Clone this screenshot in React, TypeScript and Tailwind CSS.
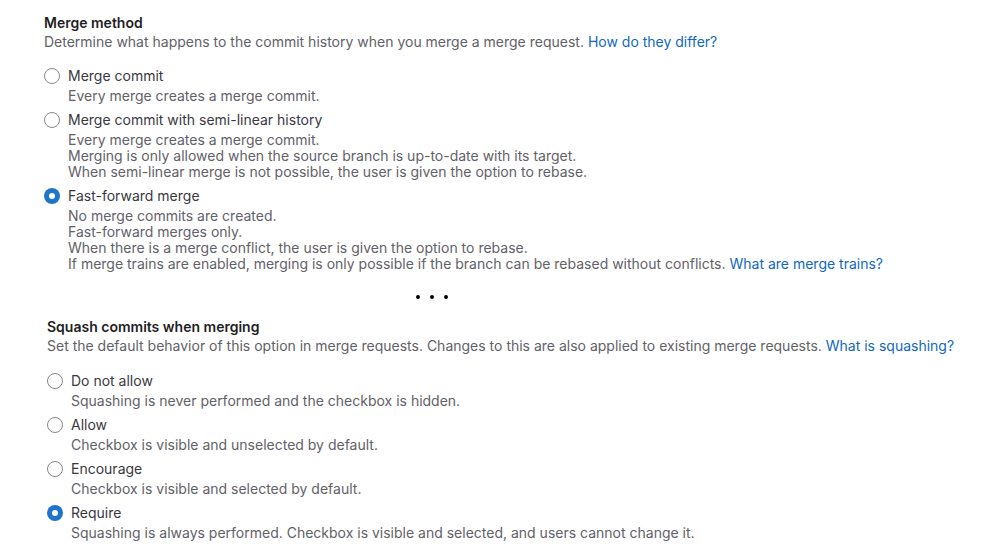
import type { ReactNode } from 'react'

interface RadioOptionProps {
  label: string
  checked?: boolean
  children: ReactNode
}

function RadioOption({ label, checked, children }: RadioOptionProps) {
  return (
    <div className="flex gap-2">
      <div className="pt-[2px]">
        {checked ? (
          <span className="flex h-4 w-4 items-center justify-center rounded-full bg-[#1f75cb]">
            <span className="h-[6px] w-[6px] rounded-full bg-white" />
          </span>
        ) : (
          <span className="block h-4 w-4 rounded-full border border-[#89888d] bg-white" />
        )}
      </div>
      <div>
        <div className="text-[14px] leading-5 text-[#3a383f]">{label}</div>
        <div className="mt-[2px] text-[14px] leading-4 text-[#626168]">{children}</div>
      </div>
    </div>
  )
}

function Link({ children }: { children: ReactNode }) {
  return <span className="text-[#1068bf]">{children}</span>
}

export default function App() {
  return (
    <div className="h-[556px] w-[983px] bg-white font-['Inter',sans-serif]">
      {/* Merge method */}
      <div className="pl-[44px] pt-[13px]">
        <div className="text-[14px] font-semibold leading-5 text-[#1f1e24]">Merge method</div>
        <div className="mt-[-1px] text-[14px] leading-5 text-[#626168]">
          Determine what happens to the commit history when you merge a merge request.{' '}
          <Link>How do they differ?</Link>
        </div>
        <div className="mt-[14px] flex flex-col gap-[6px]">
          <RadioOption label="Merge commit">
            <div>Every merge creates a merge commit.</div>
          </RadioOption>
          <RadioOption label="Merge commit with semi-linear history">
            <div>Every merge creates a merge commit.</div>
            <div>Merging is only allowed when the source branch is up-to-date with its target.</div>
            <div>When semi-linear merge is not possible, the user is given the option to rebase.</div>
          </RadioOption>
          <RadioOption label="Fast-forward merge" checked>
            <div>No merge commits are created.</div>
            <div>Fast-forward merges only.</div>
            <div>When there is a merge conflict, the user is given the option to rebase.</div>
            <div>
              If merge trains are enabled, merging is only possible if the branch can be rebased without
              conflicts. <Link>What are merge trains?</Link>
            </div>
          </RadioOption>
        </div>
      </div>

      {/* separator */}
      <div className="flex gap-[10px] pl-[416px] pt-[23px]">
        <span className="h-[4px] w-[4px] rounded-full bg-black" />
        <span className="h-[4px] w-[4px] rounded-full bg-black" />
        <span className="h-[4px] w-[4px] rounded-full bg-black" />
      </div>

      {/* Squash commits */}
      <div className="pl-[47px] pt-[18px]">
        <div className="text-[14px] font-semibold leading-5 text-[#1f1e24]">Squash commits when merging</div>
        <div className="mt-[-1px] text-[14px] leading-5 text-[#626168]">
          Set the default behavior of this option in merge requests. Changes to this are also applied to
          existing merge requests. <Link>What is squashing?</Link>
        </div>
        <div className="mt-[15px] flex flex-col gap-[6px]">
          <RadioOption label="Do not allow">
            <div>Squashing is never performed and the checkbox is hidden.</div>
          </RadioOption>
          <RadioOption label="Allow">
            <div>Checkbox is visible and unselected by default.</div>
          </RadioOption>
          <RadioOption label="Encourage">
            <div>Checkbox is visible and selected by default.</div>
          </RadioOption>
          <RadioOption label="Require" checked>
            <div>Squashing is always performed. Checkbox is visible and selected, and users cannot change it.</div>
          </RadioOption>
        </div>
      </div>
    </div>
  )
}
